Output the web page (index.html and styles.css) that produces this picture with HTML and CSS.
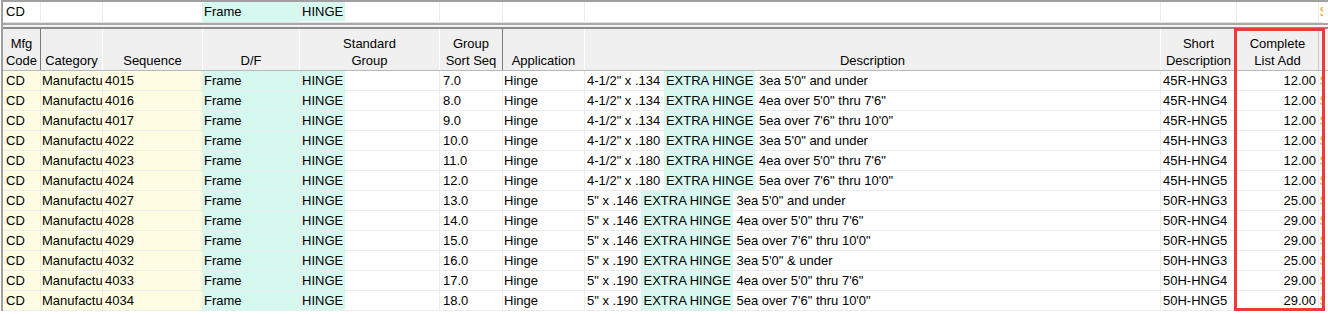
FILE: index.html
```html
<!DOCTYPE html>
<html>
<head>
<meta charset="utf-8">
<link rel="stylesheet" href="styles.css">
</head>
<body>
<div class="screen">
  <div class="grid">
    <div class="row filter">
      <div class="cell c1">CD</div>
      <div class="cell"></div>
      <div class="cell"></div>
      <div class="cell cyan">Frame</div>
      <div class="cell flush"><span class="hl">HINGE</span></div>
      <div class="cell"></div>
      <div class="cell"></div>
      <div class="cell"></div>
      <div class="cell"></div>
      <div class="cell"></div>
      <div class="cell last"><span class="orange">$</span></div>
    </div>
    <div class="splitter"></div>
    <div class="row head">
      <div class="hcell dark">Mfg<br>Code</div>
      <div class="hcell">Category</div>
      <div class="hcell">Sequence</div>
      <div class="hcell">D/F</div>
      <div class="hcell">Standard<br>Group</div>
      <div class="hcell dark">Group<br>Sort Seq</div>
      <div class="hcell">Application</div>
      <div class="hcell">Description</div>
      <div class="hcell">Short<br>Description</div>
      <div class="hcell gray">Complete<br>List Add</div>
      <div class="hcell last"></div>
    </div>

    <div class="row data">
      <div class="cell yellow c1">CD</div><div class="cell yellow cat">Manufacturer</div><div class="cell yellow">4015</div><div class="cell cyan">Frame</div><div class="cell flush"><span class="hl">HINGE</span></div><div class="cell gs">7.0</div><div class="cell ap">Hinge</div><div class="cell">4-1/2" x .134 <span class="hl">EXTRA HINGE</span> 3ea 5'0" and under</div><div class="cell">45R-HNG3</div><div class="cell num">12.00</div><div class="cell last"><span class="orange">$</span></div>
    </div>
    <div class="row data">
      <div class="cell yellow c1">CD</div><div class="cell yellow cat">Manufacturer</div><div class="cell yellow">4016</div><div class="cell cyan">Frame</div><div class="cell flush"><span class="hl">HINGE</span></div><div class="cell gs">8.0</div><div class="cell ap">Hinge</div><div class="cell">4-1/2" x .134 <span class="hl">EXTRA HINGE</span> 4ea over 5'0" thru 7'6"</div><div class="cell">45R-HNG4</div><div class="cell num">12.00</div><div class="cell last"><span class="orange">$</span></div>
    </div>
    <div class="row data">
      <div class="cell yellow c1">CD</div><div class="cell yellow cat">Manufacturer</div><div class="cell yellow">4017</div><div class="cell cyan">Frame</div><div class="cell flush"><span class="hl">HINGE</span></div><div class="cell gs">9.0</div><div class="cell ap">Hinge</div><div class="cell">4-1/2" x .134 <span class="hl">EXTRA HINGE</span> 5ea over 7'6" thru 10'0"</div><div class="cell">45R-HNG5</div><div class="cell num">12.00</div><div class="cell last"><span class="orange">$</span></div>
    </div>
    <div class="row data">
      <div class="cell yellow c1">CD</div><div class="cell yellow cat">Manufacturer</div><div class="cell yellow">4022</div><div class="cell cyan">Frame</div><div class="cell flush"><span class="hl">HINGE</span></div><div class="cell gs">10.0</div><div class="cell ap">Hinge</div><div class="cell">4-1/2" x .180 <span class="hl">EXTRA HINGE</span> 3ea 5'0" and under</div><div class="cell">45H-HNG3</div><div class="cell num">12.00</div><div class="cell last"><span class="orange">$</span></div>
    </div>
    <div class="row data">
      <div class="cell yellow c1">CD</div><div class="cell yellow cat">Manufacturer</div><div class="cell yellow">4023</div><div class="cell cyan">Frame</div><div class="cell flush"><span class="hl">HINGE</span></div><div class="cell gs">11.0</div><div class="cell ap">Hinge</div><div class="cell">4-1/2" x .180 <span class="hl">EXTRA HINGE</span> 4ea over 5'0" thru 7'6"</div><div class="cell">45H-HNG4</div><div class="cell num">12.00</div><div class="cell last"><span class="orange">$</span></div>
    </div>
    <div class="row data">
      <div class="cell yellow c1">CD</div><div class="cell yellow cat">Manufacturer</div><div class="cell yellow">4024</div><div class="cell cyan">Frame</div><div class="cell flush"><span class="hl">HINGE</span></div><div class="cell gs">12.0</div><div class="cell ap">Hinge</div><div class="cell">4-1/2" x .180 <span class="hl">EXTRA HINGE</span> 5ea over 7'6" thru 10'0"</div><div class="cell">45H-HNG5</div><div class="cell num">12.00</div><div class="cell last"><span class="orange">$</span></div>
    </div>
    <div class="row data">
      <div class="cell yellow c1">CD</div><div class="cell yellow cat">Manufacturer</div><div class="cell yellow">4027</div><div class="cell cyan">Frame</div><div class="cell flush"><span class="hl">HINGE</span></div><div class="cell gs">13.0</div><div class="cell ap">Hinge</div><div class="cell">5" x .146 <span class="hl">EXTRA HINGE</span> 3ea 5'0" and under</div><div class="cell">50R-HNG3</div><div class="cell num">25.00</div><div class="cell last"><span class="orange">$</span></div>
    </div>
    <div class="row data">
      <div class="cell yellow c1">CD</div><div class="cell yellow cat">Manufacturer</div><div class="cell yellow">4028</div><div class="cell cyan">Frame</div><div class="cell flush"><span class="hl">HINGE</span></div><div class="cell gs">14.0</div><div class="cell ap">Hinge</div><div class="cell">5" x .146 <span class="hl">EXTRA HINGE</span> 4ea over 5'0" thru 7'6"</div><div class="cell">50R-HNG4</div><div class="cell num">29.00</div><div class="cell last"><span class="orange">$</span></div>
    </div>
    <div class="row data">
      <div class="cell yellow c1">CD</div><div class="cell yellow cat">Manufacturer</div><div class="cell yellow">4029</div><div class="cell cyan">Frame</div><div class="cell flush"><span class="hl">HINGE</span></div><div class="cell gs">15.0</div><div class="cell ap">Hinge</div><div class="cell">5" x .146 <span class="hl">EXTRA HINGE</span> 5ea over 7'6" thru 10'0"</div><div class="cell">50R-HNG5</div><div class="cell num">29.00</div><div class="cell last"><span class="orange">$</span></div>
    </div>
    <div class="row data">
      <div class="cell yellow c1">CD</div><div class="cell yellow cat">Manufacturer</div><div class="cell yellow">4032</div><div class="cell cyan">Frame</div><div class="cell flush"><span class="hl">HINGE</span></div><div class="cell gs">16.0</div><div class="cell ap">Hinge</div><div class="cell">5" x .190 <span class="hl">EXTRA HINGE</span> 3ea 5'0" &amp; under</div><div class="cell">50H-HNG3</div><div class="cell num">25.00</div><div class="cell last"><span class="orange">$</span></div>
    </div>
    <div class="row data">
      <div class="cell yellow c1">CD</div><div class="cell yellow cat">Manufacturer</div><div class="cell yellow">4033</div><div class="cell cyan">Frame</div><div class="cell flush"><span class="hl">HINGE</span></div><div class="cell gs">17.0</div><div class="cell ap">Hinge</div><div class="cell">5" x .190 <span class="hl">EXTRA HINGE</span> 4ea over 5'0" thru 7'6"</div><div class="cell">50H-HNG4</div><div class="cell num">29.00</div><div class="cell last"><span class="orange">$</span></div>
    </div>
    <div class="row data">
      <div class="cell yellow c1">CD</div><div class="cell yellow cat">Manufacturer</div><div class="cell yellow">4034</div><div class="cell cyan">Frame</div><div class="cell flush"><span class="hl">HINGE</span></div><div class="cell gs">18.0</div><div class="cell ap">Hinge</div><div class="cell">5" x .190 <span class="hl">EXTRA HINGE</span> 5ea over 7'6" thru 10'0"</div><div class="cell">50H-HNG5</div><div class="cell num">29.00</div><div class="cell last"><span class="orange">$</span></div>
    </div>
  </div>
  <div class="callout"></div>
</div>
</body>
</html>
```

FILE: styles.css
```css
html, body {
  margin: 0;
  padding: 0;
  background: #ffffff;
}

.screen {
  position: relative;
  width: 1328px;
  height: 314px;
  overflow: hidden;
  font-family: "Liberation Sans", Arial, sans-serif;
  font-size: 13px;
  color: #000000;
}

.grid {
  margin-left: 1px;
  border-left: 2px solid #a0a0a0;
  border-top: 2px solid #a0a0a0;
}

.row {
  display: grid;
  grid-template-columns: 38px 62px 100px 97px 140px 63px 82px 576px 76px 82px 4px;
}

.cell {
  box-sizing: border-box;
  height: 20px;
  line-height: 19px;
  padding: 0 2px;
  border-right: 1px solid #ececec;
  border-bottom: 1px solid #ececec;
  white-space: nowrap;
  overflow: hidden;
}

.filter .cell {
  height: 21px;
  line-height: 20px;
  border-bottom-color: #e2e2e2;
}

.c1 { padding-left: 3px; }
.cat { padding-left: 1px; text-overflow: clip; }
.gs { padding-left: 3px; }
.ap { padding-left: 1px; }
.flush { padding-left: 0; }
.num { text-align: right; padding-right: 2px; }
.last { padding-left: 1px; padding-right: 0; border-right: none; }

.yellow { background: #fffde2; }
.cyan { background: #d5f8ef; padding-left: 1px; }

.hl {
  display: inline-block;
  background: #d5f8ef;
  padding: 0 2px;
  height: 19px;
}

.orange { color: #e8a030; }

.splitter {
  height: 2px;
  border-top: 2px solid #a8a8a8;
  border-bottom: 2px solid #8c8c8c;
  background: #f4f4f4;
}

.head {
  height: 42px;
  box-sizing: border-box;
  border-bottom: 1px solid #b8b8b8;
  background: #f0f0f0;
}

.hcell {
  box-sizing: border-box;
  display: flex;
  flex-direction: column;
  justify-content: flex-end;
  align-items: center;
  text-align: center;
  line-height: 17px;
  padding-bottom: 1px;
  border-right: 1px solid #ffffff;
  white-space: nowrap;
  overflow: hidden;
}

.hcell.dark { border-right: 1px solid #7a7a7a; }
.hcell.gray { border-right: 1px solid #c8c8c8; }
.hcell.last { border-right: none; }

.callout {
  position: absolute;
  left: 1234px;
  top: 28px;
  width: 91px;
  height: 283px;
  box-sizing: border-box;
  border: 3px solid #ee3a3a;
}
```
